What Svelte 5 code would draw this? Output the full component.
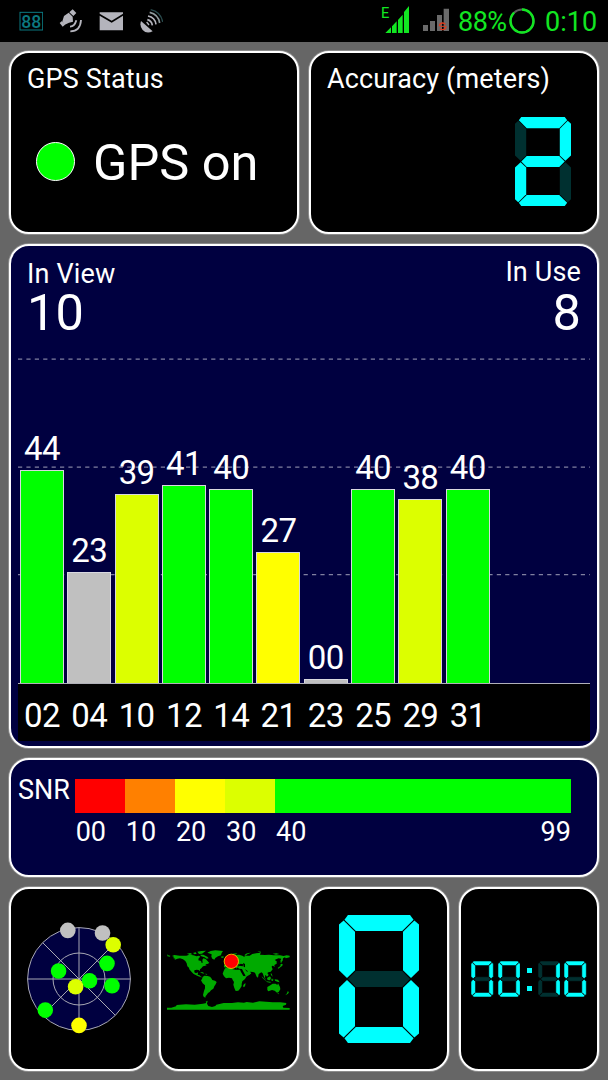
<script>
    const GREEN = '#00ff00';
    const LIME = '#dcff00';
    const YELLOW = '#ffff00';
    const GREY = '#c0c0c0';

    const satellites = [
        { prn: '02', snr: 44, color: GREEN },
        { prn: '04', snr: 23, color: GREY },
        { prn: '10', snr: 39, color: LIME },
        { prn: '12', snr: 41, color: GREEN },
        { prn: '14', snr: 40, color: GREEN },
        { prn: '21', snr: 27, color: YELLOW },
        { prn: '23', snr: 0, color: GREY },
        { prn: '25', snr: 40, color: GREEN },
        { prn: '29', snr: 38, color: LIME },
        { prn: '31', snr: 40, color: GREEN }
    ];

    const scale = [
        { label: '00', color: '#ff0000', size: 10 },
        { label: '10', color: '#ff8000', size: 10 },
        { label: '20', color: YELLOW, size: 10 },
        { label: '30', color: LIME, size: 10 },
        { label: '40', color: GREEN, size: 59 }
    ];

    const sky = [
        { x: -11.2, y: -48.6, color: GREY },
        { x: 23.5, y: -46, color: GREY },
        { x: 34.2, y: -34.3, color: LIME },
        { x: 28, y: -15.6, color: GREEN },
        { x: -20.4, y: -8, color: GREEN },
        { x: 33, y: 6.8, color: GREEN },
        { x: 10.5, y: 1.8, color: GREEN },
        { x: -3.4, y: 7.7, color: LIME },
        { x: -33.7, y: 31.1, color: GREEN },
        { x: 0, y: 46.4, color: YELLOW }
    ];

    // seven segment display, a..g
    const segments = {
        a: '5.6,0 44.4,0 46.6,2.9 39.5,10 10.5,10 3.4,2.9',
        b: '47.1,3.4 50,6 50,34.6 45,39.4 40,34.6 40,10.5',
        c: '45,40.6 50,45.4 50,74 47.1,76.6 40,69.5 40,45.4',
        d: '10.5,70 39.5,70 46.6,77.1 44.4,80 5.6,80 3.4,77.1',
        e: '5,40.6 10,45.4 10,69.5 2.9,76.6 0,74 0,45.4',
        f: '2.9,3.4 10,10.5 10,34.6 5,39.4 0,34.6 0,6',
        g: '5.6,40 10.5,35 39.5,35 44.4,40 39.5,45 10.5,45'
    };
    const lit = { 0: 'abcdef', 1: 'bc', 2: 'abged' };

    const barHeight = (snr) => Math.max(snr * 4.84, 4);
</script>

{#snippet digit(n)}
    <svg class="digit" viewBox="0 0 50 80" preserveAspectRatio="none">
        {#each Object.entries(segments) as [name, points]}
            <polygon {points} class:on={lit[n].includes(name)} />
        {/each}
    </svg>
{/snippet}

<div class="screen">
    <header class="status">
        <div class="notifications">
            <svg viewBox="57 27 72 72">
                <rect x="60" y="37" width="68" height="53" fill="none" stroke="#0b7880" stroke-width="3" />
                <text x="94" y="83" text-anchor="middle" textLength="60" lengthAdjust="spacingAndGlyphs" class="temp">88</text>
            </svg>
            <svg viewBox="177 27 72 72" fill="#b4b4bc">
                <path d="M192 48 L206 38 L218 50 L219 65 L207 68 L193 75 L187 64 Z" />
                <path d="M208 37 L218 28 L229 39 L220 48 Z M179 69 L186 63 L195 74 L188 80 Z" />
                <path d="M210 80 Q224 80 229 61 M211 94 Q241 94 243 60" fill="none" stroke="#b4b4bc" stroke-width="5.5" />
            </svg>
            <svg viewBox="297 27 72 72" fill="#b4b4bc">
                <path d="M299 37 H370 V41 L335 62 L299 41 Z" />
                <path d="M299 47 L335 68 L370 47 V91 H299 Z" />
            </svg>
            <svg viewBox="417 27 72 72">
                <path d="M423 63 L458 94 Q440 103 428 90 Q418 78 423 63 Z" fill="#b4b4bc" />
                <path d="M440 66 L447 75" stroke="#b4b4bc" stroke-width="4" />
                <g fill="none" stroke="#b4b4bc" stroke-width="5">
                    <path d="M442 59 Q455 62 457 76" />
                    <path d="M444 48 Q465 52 468 73" />
                    <path d="M449 37 Q475 43 479 69" stroke="#8f9a9c" />
                    <path d="M452 29 Q483 36 488 66" stroke="#294a4c" stroke-width="4" />
                </g>
            </svg>
        </div>
        <div class="system">
            <svg class="signal" viewBox="228 15 84 87" fill="#12e622">
                <text x="228" y="54" class="edge">E</text>
                <path d="M241 99 L258 82 V99 Z M261 79 L275 64 V99 H261 Z M279 60 L293 44 V99 H279 Z M297 36 L312 18 V99 H297 Z" />
            </svg>
            <svg class="signal weak" viewBox="354 15 84 87" fill="#6a6a6a">
                <path d="M354 75 H369 V93 H354 Z M375 63 H390 V93 H375 Z M396 45 H411 V93 H396 Z M416 26 H432 V93 H416 Z" />
                <circle cx="413" cy="79" r="10" fill="none" stroke="#e03c1c" stroke-width="4" stroke-dasharray="24 7" />
                <path d="M405 79 H421" stroke="#e03c1c" stroke-width="3" />
            </svg>
            <span class="battery">88%</span>
            <svg class="ring" viewBox="-13 -13 26 26" fill="none">
                <circle r="11.5" stroke="#5c5c5c" stroke-width="2" />
                <circle r="11.5" stroke="#12e622" stroke-width="2.4" pathLength="100" stroke-dasharray="88 12" transform="rotate(-90)" />
            </svg>
            <span class="clock">0:10</span>
        </div>
    </header>

    <main>
        <section class="panel wide gps">
            <h2>GPS Status</h2>
            <div class="state">
                <span class="led"></span>
                <span class="big">GPS on</span>
            </div>
        </section>

        <section class="panel wide accuracy">
            <h2>Accuracy (meters)</h2>
            <div class="value">{@render digit(2)}</div>
        </section>

        <section class="panel full blue chart">
            <div class="counts">
                <div>
                    <h2>In View</h2>
                    <span class="big">10</span>
                </div>
                <div class="used">
                    <h2>In Use</h2>
                    <span class="big">8</span>
                </div>
            </div>
            <div class="plot">
                <svg class="grid" viewBox="0 0 572 325">
                    <path d="M0 1.2 H572 M0 109.2 H572 M0 216.7 H572" />
                </svg>
                <div class="bars">
                    {#each satellites as sat}
                        <div class="sat">
                            <span>{String(sat.snr).padStart(2, '0')}</span>
                            <div class="bar" style="height: {barHeight(sat.snr)}px; background: {sat.color}"></div>
                        </div>
                    {/each}
                </div>
            </div>
            <div class="prns">
                {#each satellites as sat}
                    <span>{sat.prn}</span>
                {/each}
            </div>
        </section>

        <section class="panel full blue snr">
            <h2>SNR</h2>
            <div class="legend">
                {#each scale as step}
                    <div class="step" style="flex-grow: {step.size}">
                        <div class="swatch" style="background: {step.color}"></div>
                        <span>{step.label}</span>
                        {#if step.label === '40'}
                            <span class="last">99</span>
                        {/if}
                    </div>
                {/each}
            </div>
        </section>

        <section class="panel tile">
            <svg class="radar" viewBox="-52 -52 104 104">
                <circle r="51.4" fill="#000040" />
                <circle r="26" />
                <path d="M0 -51.4 V51.4 M-51.4 0 H51.4 M-36.3 -36.3 L36.3 36.3 M36.3 -36.3 L-36.3 36.3" />
                {#each sky as s}
                    <circle class="dot" cx={s.x} cy={s.y} r="7.8" fill={s.color} />
                {/each}
            </svg>
        </section>

        <section class="panel tile">
            <svg class="map" viewBox="45 209 369 180">
                <g fill="#00aa00">
                    <!-- americas -->
                    <path d="M46 222 L49 225 L55 226 L54 229 L46 228 Z M60 227 L67 224 L83 226 L103 226 L112 223 L124 225 L134 228 L141 226 L145 229 L140 234 L139 240 L147 242 L149 248 L152 247 L151 239 L154 234 L161 236 L166 241 L172 248 L166 251 L160 252 L164 255 L157 257 L153 258 L148 264 L144 267 L143 273 L140 269 L134 268 L127 270 L127 276 L132 279 L137 276 L138 279 L137 283 L143 285 L147 289 L151 290 L147 291 L137 287 L125 281 L119 275 L112 267 L111 262 L106 258 L104 249 L100 242 L93 237 L84 234 L76 235 L67 239 L70 235 L63 233 L67 230 Z" />
                    <path d="M105 220 L115 218 L122 222 L113 224 Z M123 218 L131 216 L134 220 L128 222 Z M136 214 L148 212 L162 211 L156 216 L150 220 L141 221 Z M144 223 L154 223 L166 229 L170 234 L164 235 L158 231 L148 228 Z M166 217 L176 212 L190 210 L213 212 L209 218 L207 225 L198 228 L190 233 L187 238 L181 235 L178 229 L179 222 Z M144 275 L153 276 L157 280 L150 279 Z M158 280 L166 281 L164 283 Z M206 229 L214 228 L216 231 L210 233 Z" />
                    <path d="M152 290 L157 286 L167 287 L174 289 L178 294 L181 299 L189 301 L194 305 L191 312 L187 318 L184 325 L177 330 L173 335 L168 338 L164 344 L161 347 L160 352 L155 349 L153 344 L156 332 L159 324 L159 315 L152 309 L147 300 L150 296 Z" />
                    <!-- europe and asia -->
                    <path d="M216 261 L216 254 L224 253 L222 247 L234 240 L240 236 L246 234 L245 229 L252 224 L261 223 L271 226 L276 229 L282 226 L293 226 L301 221 L312 219 L326 217 L324 223 L339 224 L351 223 L365 225 L384 225 L395 227 L404 225 L413 226 L413 231 L401 234 L399 231 L393 234 L392 241 L388 246 L385 241 L388 235 L380 234 L374 236 L368 239 L374 243 L374 250 L367 254 L368 260 L364 257 L360 256 L359 260 L362 267 L356 274 L349 276 L346 278 L350 284 L345 289 L340 283 L339 292 L342 298 L338 294 L335 287 L332 279 L328 276 L320 281 L318 292 L314 289 L309 277 L303 275 L294 274 L298 279 L293 283 L281 290 L279 283 L273 272 L270 266 L261 265 L257 261 L262 256 L272 258 L274 252 L266 250 L261 254 L258 259 L254 265 L249 258 L243 256 L237 255 L230 256 L225 262 Z" />
                    <path d="M223 235 L228 239 L231 246 L222 247 L225 242 Z M218 241 L222 240 L221 245 L217 245 Z M241 220 L256 219 L250 223 Z M277 225 L282 220 L289 218 L297 217 L286 222 L281 226 Z M316 213 L327 214 L326 217 Z M362 220 L373 219 L382 221 L372 223 Z M392 251 L391 256 L385 261 L379 265 L377 263 L385 257 L386 251 Z M386 240 L389 249 L386 248 Z" />
                    <!-- africa -->
                    <path d="M219 264 L228 262 L238 261 L242 267 L251 268 L264 268 L267 275 L274 287 L284 288 L279 296 L271 303 L269 311 L269 317 L264 325 L259 331 L251 332 L247 323 L244 313 L246 305 L242 299 L240 294 L231 292 L222 294 L216 288 L212 280 L215 272 Z M281 309 L279 318 L275 321 L273 317 L276 311 Z" />
                    <!-- oceania -->
                    <path d="M329 288 L335 294 L344 303 L339 300 L331 292 Z M343 303 L358 305 L354 307 L344 305 Z M345 293 L354 288 L357 293 L354 300 L347 299 Z M358 295 L366 296 L361 298 L364 302 L359 302 Z M356 279 L359 280 L362 289 L357 284 Z M368 297 L378 298 L383 306 L376 304 L369 301 Z M346 320 L355 315 L362 310 L371 310 L376 314 L378 309 L384 320 L385 327 L380 335 L375 337 L368 331 L360 329 L349 333 L346 329 Z M376 339 L381 339 L379 342 Z M407 333 L411 335 L408 340 L400 345 L405 339 Z" />
                    <!-- antarctica -->
                    <path d="M45 382 L58 382 L72 378 L74 374 L102 372 L128 373 L153 370 L163 368 L161 364 L167 361 L165 370 L169 377 L180 380 L190 377 L193 373 L215 368 L240 368 L258 366 L276 367 L284 365 L303 367 L322 363 L342 364 L362 366 L385 366 L403 368 L402 373 L392 377 L394 382 L413 383 L413 388 L45 388 Z" />
                </g>
                <path d="M253 253 L262 251 L263 255 L254 256 Z M273 248 L279 251 L279 261 L275 259 Z M268 270 L275 281 L282 288 L276 284 Z M278 266 L288 273 L285 274 Z" />
                <circle cx="238" cy="243" r="21.5" fill="#ff0000" stroke="#ffe000" stroke-width="2.4" />
            </svg>
        </section>

        <section class="panel tile speed">{@render digit(0)}</section>

        <section class="panel tile time">
            {@render digit(0)}
            {@render digit(0)}
            <div class="colon"><i></i><i></i></div>
            {@render digit(1)}
            {@render digit(0)}
        </section>
    </main>
</div>

<style>
    :global(body) {
        background: #666;
    }

    .screen {
        width: 608px;
        height: 1080px;
        overflow: hidden;
        background: #666;
        color: #fff;
        font-family: Roboto, "Noto Sans", sans-serif;
        font-size: 27px;
    }

    .status {
        display: flex;
        justify-content: space-between;
        height: 42px;
        padding: 0 11px 0 19px;
        box-sizing: border-box;
        background: #000;
        color: #12e622;
    }

    .notifications {
        display: flex;
        gap: 16px;
        padding-top: 9px;
    }
    .notifications svg {
        width: 24px;
        height: 24px;
    }

    .temp {
        font-size: 56px;
        font-weight: 500;
        fill: #0b7880;
    }

    .system {
        display: flex;
        align-items: center;
    }
    .signal {
        width: 28px;
        height: 29px;
        margin: 0 14px 4px 0;
    }
    .weak {
        margin-right: 7px;
    }
    .edge {
        font-size: 44px;
    }
    .battery {
        width: 51px;
        padding-top: 2px;
        letter-spacing: -.5px;
    }
    .ring {
        width: 26px;
        height: 26px;
        margin-right: 10px;
    }
    .clock {
        width: 52px;
        padding-top: 2px;
    }

    main {
        display: grid;
        grid-template-columns: repeat(4, 140px);
        grid-template-rows: 183px 504px 119px 184px;
        gap: 10px;
        padding: 9px;
    }

    .panel {
        box-sizing: border-box;
        border: 2px solid #fff;
        border-radius: 20px;
        background: #000;
        box-shadow: 0 0 0 1px rgba(255, 255, 255, .25);
    }
    .wide {
        grid-column: span 2;
        padding: 12px 15px 0 16px;
    }
    .full {
        grid-column: span 4;
    }
    .blue {
        background: #000040;
    }

    h2 {
        margin: 0;
        font-size: 27px;
        line-height: 28px;
        font-weight: normal;
        letter-spacing: .15px;
        white-space: nowrap;
    }
    .big {
        font-size: 50.5px;
        line-height: 50px;
        white-space: nowrap;
    }

    .state {
        display: flex;
        align-items: center;
        gap: 18px;
        padding: 45px 0 0 9px;
    }
    .led {
        width: 37px;
        height: 37px;
        margin-bottom: 4px;
        border: 1px solid #fff;
        border-radius: 50%;
        background: #00ff00;
    }

    .digit {
        display: block;
        fill: #003030;
    }
    .digit .on {
        fill: #00ffff;
    }

    .value {
        display: flex;
        justify-content: flex-end;
        padding: 24px 11px 0 0;
    }
    .value .digit {
        width: 56px;
        height: 89px;
    }

    .chart {
        padding: 0 7px;
    }
    .counts {
        display: flex;
        justify-content: space-between;
        height: 112px;
        padding: 14px 9px 0 9px;
        box-sizing: border-box;
    }
    .counts .big {
        display: block;
    }
    .used {
        margin-top: -2px;
        text-align: right;
    }
    .used .big {
        margin-top: 2px;
    }

    .plot {
        display: grid;
        height: 325px;
        border-bottom: 1px solid #b0b0b8;
    }
    .grid,
    .bars {
        grid-area: 1 / 1;
    }
    .grid path {
        stroke: #8080a0;
        stroke-width: 1.3;
        stroke-dasharray: 4.2 4.2;
    }
    .bars,
    .prns {
        display: flex;
        gap: 3.3px;
        padding-left: 2px;
        font-size: 33px;
        letter-spacing: -.6px;
    }
    .bars {
        align-items: flex-end;
        position: relative;
    }
    .sat {
        width: 44px;
        text-align: center;
        line-height: 42px;
    }
    .sat span {
        display: block;
    }
    .bar {
        box-sizing: border-box;
        border: 1px solid #d8d8e0;
        border-bottom: 0;
    }

    .prns {
        height: 57px;
        background: #000;
        line-height: 63px;
    }
    .prns span {
        width: 44px;
        text-align: center;
    }

    .snr {
        display: flex;
        padding: 19px 26px 0 7px;
    }
    .snr h2 {
        width: 57px;
        line-height: 23px;
        letter-spacing: 0;
    }
    .legend {
        display: flex;
        flex: 1;
    }
    .step {
        display: flex;
        flex: 0 0 0;
        flex-wrap: wrap;
        align-content: flex-start;
        justify-content: space-between;
        line-height: 39px;
    }
    .step span {
        padding-left: .7px;
    }
    .swatch {
        width: 100%;
        height: 34px;
    }

    .tile {
        display: flex;
        align-items: center;
        justify-content: center;
    }
    .radar {
        width: 104px;
        height: 104px;
        overflow: visible;
        fill: none;
        stroke: #a8a8b4;
        stroke-width: 1;
    }
    .dot {
        stroke: none;
    }
    .map {
        width: 123px;
        height: 60px;
        margin: 1px 2px 0 0;
    }
    .speed .digit {
        width: 80px;
        height: 128px;
    }

    .time {
        gap: 4.3px;
    }
    .time .digit {
        width: 22.3px;
        height: 36px;
        stroke: #000;
        stroke-width: 1.2;
    }
    .colon {
        display: flex;
        flex-direction: column;
        gap: 13px;
        width: 5px;
        padding: 0 2px;
    }
    .colon i {
        height: 5px;
        background: #00ffff;
    }
</style>
